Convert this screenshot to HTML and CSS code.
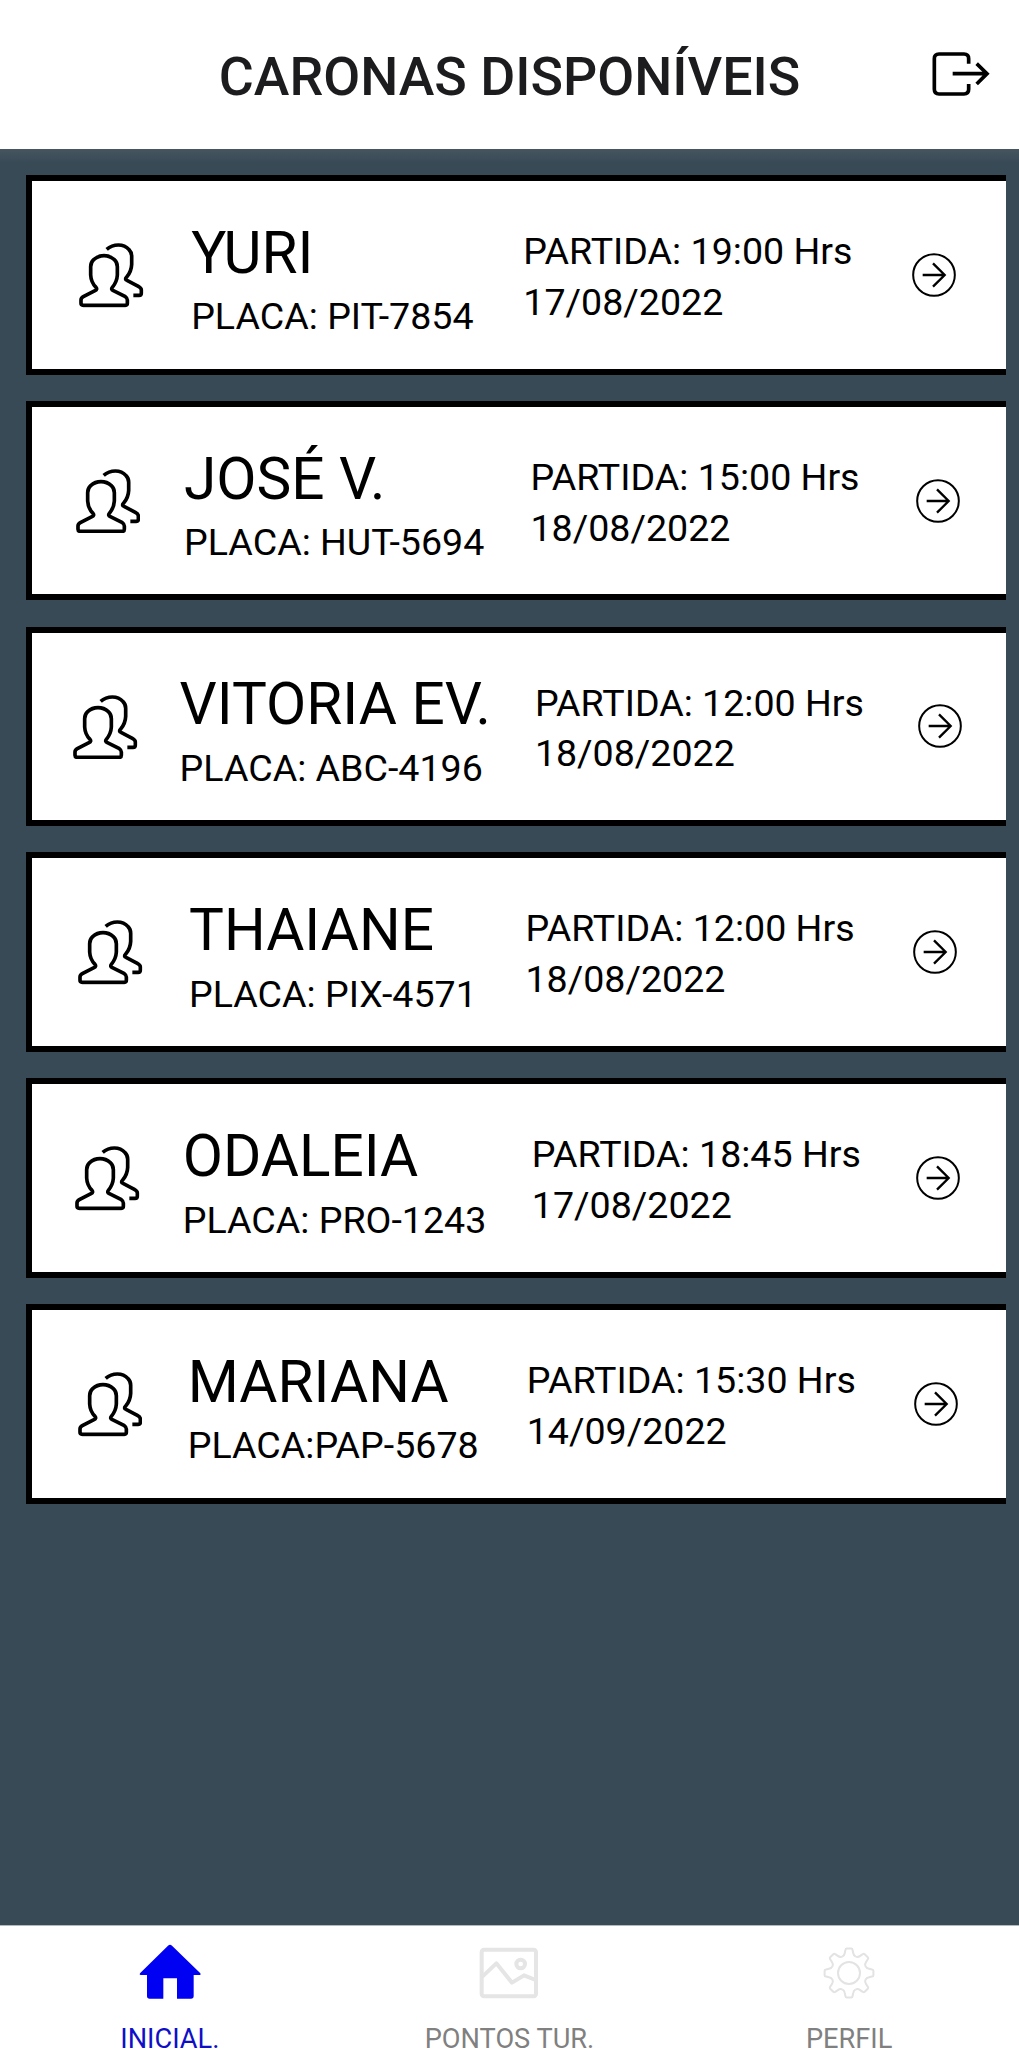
FILE: index.html
```html
<!DOCTYPE html>
<html lang="pt-BR">
<head>
<meta charset="utf-8">
<title>Caronas disponíveis</title>
<link rel="stylesheet" href="styles.css">
</head>
<body>
<svg class="defs" aria-hidden="true">
  <symbol id="people" viewBox="57 54 194 194">
    <path d="M70 241H196Q202 241 202 235V225Q202 219 196 215L160 197Q152 193 157 187Q171 170 172 150V125Q172 112 163 104Q150 92 132 92Q114 92 101 104Q92 112 92 125V150Q93 172 108 187Q113 193 105 197L70 215Q63 219 63 225V235Q63 241 70 241ZM140 73Q155 60 175 60Q195 60 207 74Q215 82 215 94V118Q214 140 200 156Q193 163 201 166L235 184Q244 189 244 195V204Q244 211 237 211H220"/>
  </symbol>
  <symbol id="go" viewBox="66 69 132 132">
    <circle cx="132" cy="135" r="62.500" stroke-width="6"/>
    <path d="M98 135H163M129 100L164 135L129 170" stroke-width="7"/>
  </symbol>
</svg>
<header class="header">
  <h1 class="title">CARONAS DISPONÍVEIS</h1>
  <svg class="logout" viewBox="90 60 180 144"><path d="M206 101V86Q206 72 192 72H117Q103 72 103 86V178Q103 192 117 192H192Q206 192 206 178V162M158 131H260M230 101L261 131L230 162"/></svg>
</header>
<main class="list">
  <article class="card">
    <svg class="people"><use href="#people"/></svg>
    <div class="driver"><div class="name">YURI</div><div class="plate">PLACA: PIT-7854</div></div>
    <div class="trip">PARTIDA: 19:00 Hrs<br>17/08/2022</div>
    <svg class="go"><use href="#go"/></svg>
  </article>
  <article class="card">
    <svg class="people"><use href="#people"/></svg>
    <div class="driver"><div class="name">JOSÉ V.</div><div class="plate">PLACA: HUT-5694</div></div>
    <div class="trip">PARTIDA: 15:00 Hrs<br>18/08/2022</div>
    <svg class="go"><use href="#go"/></svg>
  </article>
  <article class="card">
    <svg class="people"><use href="#people"/></svg>
    <div class="driver"><div class="name">VITORIA EV.</div><div class="plate">PLACA: ABC-4196</div></div>
    <div class="trip">PARTIDA: 12:00 Hrs<br>18/08/2022</div>
    <svg class="go"><use href="#go"/></svg>
  </article>
  <article class="card">
    <svg class="people"><use href="#people"/></svg>
    <div class="driver"><div class="name">THAIANE</div><div class="plate">PLACA: PIX-4571</div></div>
    <div class="trip">PARTIDA: 12:00 Hrs<br>18/08/2022</div>
    <svg class="go"><use href="#go"/></svg>
  </article>
  <article class="card">
    <svg class="people"><use href="#people"/></svg>
    <div class="driver"><div class="name">ODALEIA</div><div class="plate">PLACA: PRO-1243</div></div>
    <div class="trip">PARTIDA: 18:45 Hrs<br>17/08/2022</div>
    <svg class="go"><use href="#go"/></svg>
  </article>
  <article class="card">
    <svg class="people"><use href="#people"/></svg>
    <div class="driver"><div class="name">MARIANA</div><div class="plate">PLACA:PAP-5678</div></div>
    <div class="trip">PARTIDA: 15:30 Hrs<br>14/09/2022</div>
    <svg class="go"><use href="#go"/></svg>
  </article>
</main>
<nav class="tabs">
  <a class="tab active">
    <svg class="tab-icon" viewBox="411 96 198 180"><path fill="#0000f2" d="M504 107q6-5 12 0L601 190q3 5-2 5H581V258q0 8-8 8H531V205H490V266H449q-8 0-8-8V195H422q-5 0-2-5Z"/></svg>
    <span>INICIAL.</span>
  </a>
  <a class="tab">
    <svg class="tab-icon" viewBox="411 96 198 180"><g fill="none" stroke="#e5e5e5" stroke-width="12" stroke-linejoin="round"><rect x="428" y="119.500" width="163" height="139" rx="7"/><path d="M430 200L472 160L519 218L555 196L590 210"/><circle cx="545" cy="162" r="13"/></g></svg>
    <span>PONTOS TUR.</span>
  </a>
  <a class="tab">
    <svg class="tab-icon" viewBox="-33 -31 66 60"><g fill="none" stroke="#e3e3e3" stroke-width="2"><circle r="11"/>
      <path id="tooth" d="M-6.800-16.400Q-4.600-17.400-4.200-20L-3.600-23Q-3.400-24.400-2.200-24.400H2.200Q3.400-24.400 3.600-23L4.200-20Q4.600-17.400 6.800-16.400"/>
      <use href="#tooth" transform="rotate(45)"/><use href="#tooth" transform="rotate(90)"/><use href="#tooth" transform="rotate(135)"/><use href="#tooth" transform="rotate(180)"/><use href="#tooth" transform="rotate(225)"/><use href="#tooth" transform="rotate(270)"/><use href="#tooth" transform="rotate(315)"/></g></svg>
    <span>PERFIL</span>
  </a>
</nav>
</body>
</html>
```
FILE: styles.css
```css
* { box-sizing: border-box; }
body {
  margin: 0;
  height: 2056px;
  display: flex;
  flex-direction: column;
  font-family: Roboto, "Liberation Sans", sans-serif;
  color: #000;
  background: #394a57;
}
.defs { display: none; }
.header {
  height: 149px;
  flex: none;
  display: grid;
  grid-template-columns: 89px 1fr 89px;
  align-items: center;
  background: #fff;
}
.title {
  grid-column: 2;
  margin: 4.500px 0 0;
  text-align: center;
  font-size: 53.700px;
  font-weight: 500;
  line-height: 62px;
  color: #1c1c1e;
}
.logout {
  width: 60px;
  height: 48px;
  margin-bottom: 1px;
  fill: none;
  stroke: #000;
  stroke-width: 11;
}
.list {
  flex: 1;
  display: flex;
  flex-direction: column;
  gap: 26.100px;
  padding: 26px 13px 0 26px;
  background: linear-gradient(#46555f, #394a57 14px);
}
.card {
  height: 199.700px;
  flex: none;
  display: flex;
  align-items: center;
  justify-content: space-evenly;
  border: 6px solid #000;
  border-right: 0;
  background: #fff;
}
.people, .go { fill: none; stroke: #000; flex: none; }
.people {
  width: 64.700px;
  height: 64.700px;
  margin-top: 1px;
  stroke-width: 11;
}
.go { width: 44px; height: 44px; margin: 0 2.800px; }
.driver, .trip { white-space: nowrap; }
.driver { padding-top: 9.500px; }
.name { font-size: 58.500px; line-height: 70px; }
.plate { margin-top: 3.700px; font-size: 37.600px; line-height: 50px; }
.trip {
  padding: 3.800px 9.500px 0 2.500px;
  font-size: 37.600px;
  line-height: 50.700px;
}
.tabs {
  height: 131px;
  flex: none;
  display: grid;
  grid-template-columns: repeat(3, 1fr);
  border-top: 1px solid #b4b8bd;
  background: #fff;
}
.tab {
  display: flex;
  flex-direction: column;
  align-items: center;
  padding-top: 16px;
  font-size: 27.200px;
  line-height: 32px;
  color: #808080;
}
.tab.active { color: #0f0fc8; }
.tab-icon { width: 66px; height: 60px; margin-bottom: 20.800px; flex: none; }
```
